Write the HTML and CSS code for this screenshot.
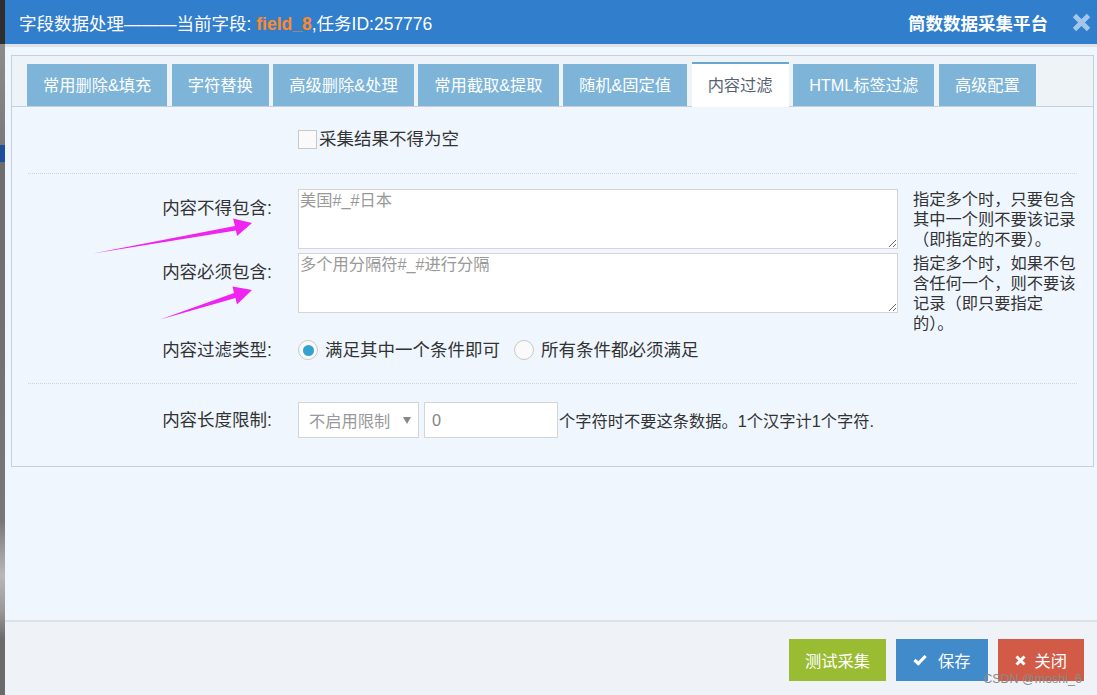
FILE: index.html
```html
<!DOCTYPE html>
<html lang="zh-CN">
<head>
<meta charset="utf-8">
<title>字段数据处理</title>
<link rel="stylesheet" href="styles.css">
</head>
<body>
<div class="dialog">
  <header class="titlebar">
    <div class="title">字段数据处理———当前字段: <b class="field">field_8</b>,任务ID:257776</div>
    <div class="brand">筒数数据采集平台</div>
    <svg class="close" width="19" height="19" viewBox="0 0 19 19"><path d="M2.5 2.5 L16.5 16.5 M16.5 2.5 L2.5 16.5" stroke="#a3c7ec" stroke-width="4.8" fill="none"/></svg>
  </header>
  <main class="modal-body">
    <section class="tabs-panel">
      <nav class="tab-nav">
        <span class="tab">常用删除&amp;填充</span>
        <span class="tab">字符替换</span>
        <span class="tab">高级删除&amp;处理</span>
        <span class="tab">常用截取&amp;提取</span>
        <span class="tab">随机&amp;固定值</span>
        <span class="tab active">内容过滤</span>
        <span class="tab">HTML标签过滤</span>
        <span class="tab">高级配置</span>
      </nav>
      <div class="tab-content">
        <div class="form-row check-row">
          <div class="label"></div>
          <label class="check"><span class="checkbox"></span>采集结果不得为空</label>
        </div>
        <div class="filter-block">
          <div class="form-row">
            <div class="label label-top">内容不得包含:</div>
            <textarea class="area" placeholder="美国#_#日本"></textarea>
            <p class="note">指定多个时，只要包含其中一个则不要该记录（即指定的不要）。</p>
          </div>
          <div class="form-row row-gap">
            <div class="label label-top">内容必须包含:</div>
            <textarea class="area" placeholder="多个用分隔符#_#进行分隔"></textarea>
            <p class="note">指定多个时，如果不包含任何一个，则不要该记录（即只要指定的）。</p>
          </div>
          <div class="form-row radio-row">
            <div class="label">内容过滤类型:</div>
            <div class="radios">
              <span class="radio-item"><span class="radio checked"></span>满足其中一个条件即可</span>
              <span class="radio-item"><span class="radio"></span>所有条件都必须满足</span>
            </div>
          </div>
        </div>
        <div class="form-row length-row">
          <div class="label">内容长度限制:</div>
          <div class="select"><span>不启用限制</span><span class="caret"></span></div>
          <input class="num" type="text" value="0">
          <span class="tail">个字符时不要这条数据。1个汉字计1个字符.</span>
        </div>
      </div>
    </section>
  </main>
  <footer class="modal-footer">
    <button class="btn btn-green">测试采集</button>
    <button class="btn btn-blue"><svg width="14" height="12" viewBox="0 0 14 12"><path d="M1.5 6 L5.3 9.6 L12.6 2" stroke="#fff" stroke-width="3.2" fill="none"/></svg>保存</button>
    <button class="btn btn-red"><svg width="11" height="11" viewBox="0 0 11 11"><path d="M1.5 1.5 L9.5 9.5 M9.5 1.5 L1.5 9.5" stroke="#fff" stroke-width="3" fill="none"/></svg>关闭</button>
  </footer>
</div>
<svg class="annot" width="1097" height="695" viewBox="0 0 1097 695">
  <polygon points="93,253.5 235,226 233,218.5 252,223 237,236 236,230.5" fill="#f023f0"/>
  <polygon points="160,319.5 234,293 232.5,286.5 252,290 237,304.5 235.5,298" fill="#f023f0"/>
</svg>
<div class="watermark">CSDN @moshi_6</div>
</body>
</html>
```

FILE: styles.css
```css
* { box-sizing: border-box; }
html, body { margin: 0; height: 100%; }
body {
  overflow: hidden;
  font-family: "Liberation Sans", "Noto Sans CJK SC", sans-serif;
  color: #333;
  background: linear-gradient(to bottom,
    #2e2e2e 0, #2e2e2e 44px, #8c8c8c 44px, #7a7a7a 145px,
    #1f4f9c 145px, #1f4f9c 162px, #6d6d6d 162px, #777 520px,
    #b8b8b8 575px, #9a9a9a 610px, #6a6a6a 640px, #6a6a6a 100%);
}
.dialog {
  margin-left: 5px;
  width: 1095px;
  height: 695px;
  display: flex;
  flex-direction: column;
  background: #eff6fe;
}
.titlebar {
  height: 47px;
  flex-shrink: 0;
  background: #307ecc;
  border-bottom: 3px solid #dfe3e8;
  color: #fff;
  display: flex;
  align-items: center;
  padding: 0 9px 0 14px;
  font-size: 17.5px;
}
.title { flex: 1; white-space: nowrap; }
.field { color: #ff892a; font-weight: bold; }
.brand { font-weight: bold; margin-right: 24px; }
.close { display: block; }

.modal-body { flex: 1; padding: 8px 6px 0; }
.tabs-panel { border: 1px solid #c5d0dc; }
.tab-nav {
  height: 51px;
  padding: 8px 0 0 15px;
  background: #eef3f8;
  border-bottom: 1px solid #c5d0dc;
  display: flex;
  align-items: flex-start;
  gap: 4.5px;
}
.tab {
  height: 42px;
  line-height: 42px;
  padding: 0 16px;
  background: #7db4d8;
  color: #fff;
  font-size: 16.25px;
  white-space: nowrap;
}
.tab.active {
  height: 45px;
  margin-top: -2px;
  line-height: 43px;
  background: #fff;
  color: #576373;
  border-top: 2px solid #6aa6d5;
}
.tab-content { padding: 0 16px; }

.form-row { display: flex; align-items: flex-start; }
.label {
  width: 258px;
  flex-shrink: 0;
  padding-right: 14px;
  margin-right: 12px;
  text-align: right;
  font-size: 17.5px;
  line-height: 20px;
  color: #333;
}
.label-top { padding-top: 9px; }

.check-row {
  padding: 23px 0 24px;
  border-bottom: 1px dotted #cdd5de;
  align-items: center;
}
.check {
  display: flex;
  align-items: center;
  gap: 2px;
  font-size: 17.5px;
  line-height: 19px;
}
.checkbox {
  width: 19px;
  height: 19px;
  border: 1px solid #c8c8c8;
  background: #fafafa;
}

.filter-block {
  padding: 15px 0 23px;
  border-bottom: 1px dotted #cdd5de;
}
.area {
  width: 600px;
  height: 60px;
  flex-shrink: 0;
  border: 1px solid #d5d5d5;
  background: #fff;
  padding: 0 1px;
  font: 16.25px/20px "Liberation Sans", "Noto Sans CJK SC", sans-serif;
  color: #333;
  outline: none;
}
.area::placeholder { color: #999; }
.note {
  margin: 0 0 0 15px;
  width: 165px;
  font-size: 16.25px;
  line-height: 20px;
  color: #333;
}
.row-gap { margin-top: 4px; }
.radio-row { margin-top: 7px; align-items: center; }
.radios { display: flex; align-items: center; gap: 14px; }
.radio-item {
  display: flex;
  align-items: center;
  gap: 7px;
  font-size: 17.5px;
  line-height: 20px;
}
.radio {
  width: 20px;
  height: 20px;
  border-radius: 50%;
  border: 1px solid #c8c8c8;
  background: #fafafa;
  display: flex;
  align-items: center;
  justify-content: center;
}
.radio.checked::after {
  content: "";
  width: 11px;
  height: 11px;
  border-radius: 50%;
  background: #32a3ce;
}

.length-row { padding: 18px 0 28px; align-items: center; }
.select {
  width: 121px;
  height: 36px;
  border: 1px solid #d5d5d5;
  background: #fff;
  padding: 0 7px 0 10px;
  display: flex;
  align-items: center;
  justify-content: space-between;
  color: #999;
  font-size: 16.25px;
}
.caret {
  width: 0;
  height: 0;
  border-left: 4px solid transparent;
  border-right: 4px solid transparent;
  border-top: 7px solid #888;
}
.num {
  width: 134px;
  height: 36px;
  margin-left: 5px;
  border: 1px solid #d5d5d5;
  background: #fff;
  padding: 0 7px;
  font: 16.25px "Liberation Sans", "Noto Sans CJK SC", sans-serif;
  color: #858585;
  outline: none;
}
.tail { margin-left: 1px; font-size: 16.25px; color: #333; white-space: nowrap; }

.modal-footer {
  height: 75px;
  flex-shrink: 0;
  border-top: 2px solid #dde2e8;
  background: #eff3f8;
  padding: 17px 16px 0;
  display: flex;
  justify-content: flex-end;
  align-items: flex-start;
  gap: 10px;
}
.btn {
  height: 42px;
  border: none;
  color: #fff;
  font: 16.25px "Liberation Sans", "Noto Sans CJK SC", sans-serif;
  display: inline-flex;
  align-items: center;
  padding: 0 16px;
  gap: 10px;
}
.btn-green { background: #9abc32; }
.btn-blue { background: #428bca; padding: 0 17px; gap: 11px; }
.btn-red { background: #d15b47; padding: 0 17px; gap: 9px; }

.annot { position: absolute; left: 0; top: 0; pointer-events: none; }
.watermark {
  position: absolute;
  right: 15px;
  top: 671px;
  font-size: 12.5px;
  line-height: 16px;
  color: #8a8a8a;
  pointer-events: none;
}
```
